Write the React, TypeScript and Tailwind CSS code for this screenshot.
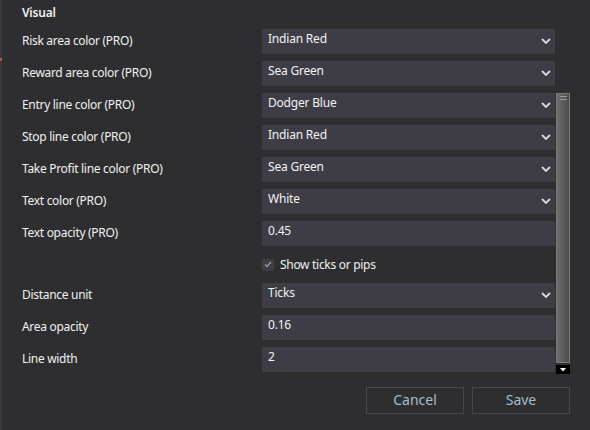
import React from 'react'

type Row =
  | { kind: 'select'; label: string; value: string }
  | { kind: 'text'; label: string; value: string }
  | { kind: 'check'; label: string }

const rows: Row[] = [
  { kind: 'select', label: 'Risk area color (PRO)', value: 'Indian Red' },
  { kind: 'select', label: 'Reward area color (PRO)', value: 'Sea Green' },
  { kind: 'select', label: 'Entry line color (PRO)', value: 'Dodger Blue' },
  { kind: 'select', label: 'Stop line color (PRO)', value: 'Indian Red' },
  { kind: 'select', label: 'Take Profit line color (PRO)', value: 'Sea Green' },
  { kind: 'select', label: 'Text color (PRO)', value: 'White' },
  { kind: 'text', label: 'Text opacity (PRO)', value: '0.45' },
  { kind: 'check', label: 'Show ticks or pips' },
  { kind: 'select', label: 'Distance unit', value: 'Ticks' },
  { kind: 'text', label: 'Area opacity', value: '0.16' },
  { kind: 'text', label: 'Line width', value: '2' },
]

function Chevron() {
  return (
    <svg width="10" height="6" viewBox="0 0 10 6" className="shrink-0">
      <path d="M1 1 L5 5 L9 1" fill="none" stroke="#d8d8dc" strokeWidth="1.8" />
    </svg>
  )
}

function Field({ row }: { row: Row }) {
  if (row.kind === 'check') {
    return (
      <div className="col-span-2 grid grid-cols-[240px_293px] h-[23px] mb-[7px]">
        <div />
        <div className="flex items-center gap-[6px]">
          <div className="w-[12px] h-[12px] bg-[#3e3d45] flex items-center justify-center">
            <svg width="8" height="7" viewBox="0 0 8 7">
              <path d="M1 3.5 L3 5.5 L7 1" fill="none" stroke="#9a9aa0" strokeWidth="1.4" />
            </svg>
          </div>
          <span className="text-[12px] leading-[16px] tracking-[-0.3px] text-[#f0f0f0]">{row.label}</span>
        </div>
      </div>
    )
  }
  return (
    <>
      <div className="h-[25px] mb-[7px] flex items-center pb-[2px] text-[12px] tracking-[-0.3px] text-[#f0f0f0]">
        {row.label}
      </div>
      <div className="h-[25px] mb-[7px] bg-[#3e3d45] flex items-start justify-between pl-[6px] pr-[4px] pt-[2px]">
        <span className="text-[12px] leading-[16px] tracking-[-0.2px] text-[#f2f2f2]">{row.value}</span>
        {row.kind === 'select' && (
          <div className="pt-[7px]">
            <Chevron />
          </div>
        )}
      </div>
    </>
  )
}

export default function App() {
  return (
    <div
      className="w-[590px] h-[430px] bg-[#2e2e30] flex overflow-hidden"
      style={{ fontFamily: '"Noto Sans", "Open Sans", sans-serif' }}
    >
      <div className="w-[2px] bg-[#38383b] flex flex-col">
        <div className="h-[58px]" />
        <div className="h-[3px] bg-[#c0504d]" />
      </div>
      <div className="flex-1 flex flex-col">
        <div className="flex">
          <div className="pl-[20px] w-[554px]">
            <div className="pt-[5px] h-[29px] text-[12px] leading-[16px] font-semibold tracking-[-0.2px] text-[#f0f0f0]">
              Visual
            </div>
            <div className="grid grid-cols-[240px_293px]">
              {rows.map((r, i) => (
                <Field key={i} row={r} />
              ))}
            </div>
          </div>
          <div className="w-[14px] pt-[93px] flex flex-col">
            <div className="h-[270px] border border-[#7a7a7a] bg-gradient-to-r from-[#6e6e6e] to-[#4c4c4c] flex flex-col items-center pt-[2px] gap-[2px]">
              <div className="w-[7px] h-px bg-[#9a9a9a]" />
              <div className="w-[7px] h-px bg-[#9a9a9a]" />
            </div>
            <div className="h-[9px] mt-[2px] bg-black flex items-center justify-center">
              <svg width="6" height="4" viewBox="0 0 6 4">
                <path d="M0 0 H6 L3 3.5 Z" fill="#fff" />
              </svg>
            </div>
          </div>
        </div>
        <div className="flex justify-end gap-[8px] pr-[20px] mt-[8px]">
          <button className="w-[98px] h-[27px] border border-[#47474b] text-[14px] leading-[20px] pb-[1px] text-[#a9bccd]">
            Cancel
          </button>
          <button className="w-[98px] h-[27px] border border-[#47474b] text-[14px] leading-[20px] pb-[1px] text-[#a9bccd]">
            Save
          </button>
        </div>
      </div>
    </div>
  )
}
